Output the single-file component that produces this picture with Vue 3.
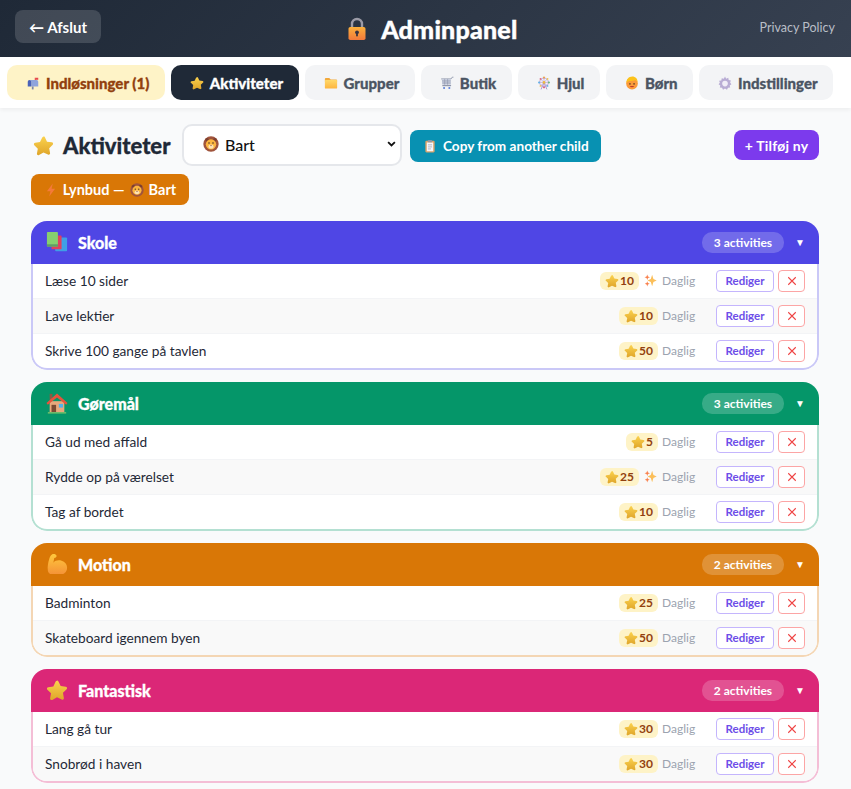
<template>
  <div class="admin">
    <!-- emoji set, reused through <use> -->
    <svg class="defs" aria-hidden="true">
      <defs>
        <linearGradient id="gold" x1="0" y1="0" x2="0" y2="1">
          <stop offset="0" stop-color="#fbd24e" />
          <stop offset="1" stop-color="#dfa52a" />
        </linearGradient>
        <linearGradient id="orange" x1="0" y1="0" x2="0" y2="1">
          <stop offset="0" stop-color="#ffc83d" />
          <stop offset="1" stop-color="#f59337" />
        </linearGradient>
        <linearGradient id="lockbody" x1="0" y1="0" x2="0" y2="1">
          <stop offset="0" stop-color="#fbb03b" />
          <stop offset="1" stop-color="#f4793b" />
        </linearGradient>
        <linearGradient id="foldercolor" x1="0" y1="0" x2="0" y2="1">
          <stop offset="0" stop-color="#ffd869" />
          <stop offset="1" stop-color="#fdb53f" />
        </linearGradient>
      </defs>
      <symbol id="star" viewBox="0 0 24 24">
        <path d="M12 1.500c.7 0 1.300.4 1.600 1.100l2.400 5 5.500.8c1.400.2 2 1.800 1 2.800l-4 3.900 1 5.500c.2 1.400-1.200 2.400-2.400 1.700L12 20l-5.100 2.800c-1.200.7-2.600-.3-2.400-1.700l1-5.500-4-3.900c-1-1-.4-2.600 1-2.800l5.500-.8 2.400-5c.3-.7.900-1.100 1.600-1.100z" fill="url(#gold)" />
      </symbol>
      <symbol id="lock" viewBox="0 0 24 24">
        <path d="M7 11V7a5 5 0 0 1 10 0v4" fill="none" stroke="#9a9aa6" stroke-width="2.400" />
        <rect x="3.500" y="10" width="17" height="13" rx="1.800" fill="url(#lockbody)" />
        <circle cx="12" cy="15.300" r="1.900" fill="#3b3340" />
        <rect x="11.100" y="15.500" width="1.800" height="4" rx=".8" fill="#3b3340" />
      </symbol>
      <symbol id="mailbox" viewBox="0 0 24 24">
        <rect x="15" y="3" width="2" height="7" fill="#e5484d" />
        <rect x="17" y="3" width="4" height="3.500" fill="#e5484d" />
        <path d="M6 7h12a3 3 0 0 1 3 3v8H9V10a3 3 0 0 0-3-3z" fill="#8fa4dc" />
        <path d="M6 7a3 3 0 0 1 3 3v8H3v-8a3 3 0 0 1 3-3z" fill="#4a62b8" />
        <rect x="10" y="18" width="3" height="5" fill="#7d86a6" />
      </symbol>
      <symbol id="folder" viewBox="0 0 24 24">
        <path d="M1.500 5C1.500 4.200 2.200 3.500 3 3.500h6L11.500 6H21c.8 0 1.500.7 1.500 1.500v2h-21z" fill="#f2a93b" />
        <rect x="1.500" y="7" width="21" height="14.500" rx="1.500" fill="url(#foldercolor)" />
      </symbol>
      <symbol id="cart" viewBox="0 0 24 24">
        <path d="M2 5h17l2-3h2" fill="none" stroke="#8b93a8" stroke-width="1.500" />
        <path d="M3 5h15.500v10H4z" fill="#c8cede" />
        <path d="M3.500 8.500h15M3.800 12h14.700M8 5v10M13 5v10" stroke="#8b93a8" stroke-width="1" />
        <path d="M4 15.500h15v2H4z" fill="#8b93a8" />
        <circle cx="7" cy="20.500" r="1.800" fill="#5e80d8" />
        <circle cx="16" cy="20.500" r="1.800" fill="#5e80d8" />
      </symbol>
      <symbol id="wheel" viewBox="0 0 24 24">
        <path d="M12 11l-5 12M12 11l5 12" stroke="#a98fc9" stroke-width="1.600" />
        <circle cx="12" cy="11" r="7.500" fill="none" stroke="#b79ad6" stroke-width="1.500" />
        <path d="M12 2v18M3 11h18M5.600 4.600l12.800 12.800M18.400 4.600L5.600 17.400" stroke="#a98fc9" stroke-width="1" />
        <circle cx="12" cy="2.500" r="1.700" fill="#f0a03c" />
        <circle cx="12" cy="19.500" r="1.700" fill="#e5607a" />
        <circle cx="3.500" cy="11" r="1.700" fill="#5fb3e6" />
        <circle cx="20.500" cy="11" r="1.700" fill="#68c07a" />
        <circle cx="6" cy="5" r="1.500" fill="#e5607a" />
        <circle cx="18" cy="5" r="1.500" fill="#f6c844" />
        <circle cx="6" cy="17" r="1.500" fill="#f6c844" />
        <circle cx="18" cy="17" r="1.500" fill="#5fb3e6" />
        <circle cx="12" cy="11" r="2.300" fill="#f0b83c" />
      </symbol>
      <symbol id="child" viewBox="0 0 24 24">
        <circle cx="12" cy="13" r="10" fill="#fb9a3a" />
        <path d="M2.500 12C2 6 6.500 1 12.500 1c5.500 0 9.500 4 9 10-1-2-2.500-3.500-4-4-3 1.500-8 2-10 1.500-2 .7-4 2-5 3.500z" fill="#fcc21b" />
        <circle cx="8.500" cy="13.500" r="1.300" fill="#5a3a20" />
        <circle cx="15.500" cy="13.500" r="1.300" fill="#5a3a20" />
        <path d="M8 17c2.200 3 5.800 3 8 0z" fill="#c0392b" />
      </symbol>
      <symbol id="gear" viewBox="0 0 24 24">
        <path d="M12 1l2 3.500 3.600-1.300.7 3.800 3.800.7-1.300 3.500L23 14l-3 2.200.9 3.600-3.800.4-1.700 3.400L12 21.500l-3.400 2.100-1.700-3.400-3.800-.4.900-3.600L1 14l2.200-2.300-1.300-3.500 3.800-.7.700-3.800L10 4.500z" fill="#b8acd4" />
        <circle cx="12" cy="13" r="4.800" fill="#f0edf7" />
      </symbol>
      <symbol id="lion" viewBox="0 0 24 24">
        <circle cx="12" cy="12" r="11.500" fill="#a0543c" />
        <circle cx="6" cy="5.500" r="2.600" fill="#7c3f2e" />
        <circle cx="18" cy="5.500" r="2.600" fill="#7c3f2e" />
        <circle cx="12" cy="12.500" r="7.800" fill="#fbb53f" />
        <circle cx="9" cy="10.500" r="1.100" fill="#3d2a22" />
        <circle cx="15" cy="10.500" r="1.100" fill="#3d2a22" />
        <ellipse cx="12" cy="16" rx="4" ry="3.200" fill="#fde3b4" />
        <path d="M10.500 13.800h3L12 15.500z" fill="#7c3f2e" />
      </symbol>
      <symbol id="bolt" viewBox="0 0 24 24">
        <path d="M15 1L5 14h6l-2 9 10-13h-6z" fill="#f47a3a" />
      </symbol>
      <symbol id="books" viewBox="0 0 24 24">
        <rect x="10" y="7" width="13" height="15" rx="1" fill="#3f9fe6" />
        <rect x="6" y="5" width="11" height="15" rx="1" fill="#e0405e" />
        <rect x="1" y="1" width="12" height="16" rx="1" fill="#86cf6f" />
        <rect x="1" y="14.500" width="12" height="2.500" fill="#5f9c66" />
      </symbol>
      <symbol id="house" viewBox="0 0 24 24">
        <rect x="4" y="2" width="3" height="7" fill="#8a5a44" />
        <rect x="4" y="10" width="16" height="12" fill="#e8a87c" />
        <path d="M12 1.500L.5 12l1.500 2L12 6l10 8 1.500-2z" fill="#e5533d" />
        <rect x="6" y="14" width="5" height="8" fill="#7a4a33" />
        <rect x="14" y="13" width="4.500" height="4" fill="#4fb2ea" />
        <rect x="2" y="22" width="20" height="1.500" fill="#7cc36b" />
      </symbol>
      <symbol id="muscle" viewBox="0 0 24 24">
        <path d="M2 19c-.6-4 .4-9 1.400-12 .6-2 1.100-4.500 3.100-5.500 2-.7 4.500-.2 5 1.500.4 1.300-1 2.300-2.500 2.500L8 10.500c2-2.500 6-3 9-2 3.500 1 6 4 6 7.500 0 3.500-2 6.500-5.500 7H6.500c-2.500 0-4.200-1.500-4.500-4z" fill="url(#orange)" />
      </symbol>
      <symbol id="sparkles" viewBox="0 0 24 24">
        <path d="M15 1.500l2.400 7.600 6.100 2.900-6.100 2.900L15 22.500l-2.400-7.600L6.500 12l6.100-2.900z" fill="#fbbf5a" />
        <path d="M6 1l1.300 3.700L11 6 7.300 7.300 6 11 4.700 7.300 1 6l3.700-1.300z" fill="#f97f4a" />
        <path d="M6 13.500l1.200 3.300 3.300 1.200-3.300 1.200L6 23l-1.200-3.800L1.500 18l3.300-1.200z" fill="#f97f4a" />
      </symbol>
      <symbol id="clipboard" viewBox="0 0 24 24">
        <rect x="4" y="3" width="16" height="20" rx="2" fill="#d9a36b" />
        <rect x="6.500" y="6" width="11" height="15" fill="#f5f7fb" />
        <rect x="8.500" y="1.500" width="7" height="4" rx="1" fill="#8f98a8" />
        <path d="M8.500 10h7M8.500 13.500h7M8.500 17h5" stroke="#9aa3b5" stroke-width="1.300" />
      </symbol>
    </svg>

    <header class="topbar">
      <button class="exit-btn">← Afslut</button>
      <h1 class="app-title">
        <svg class="emoji title-emoji"><use href="#lock" /></svg>
        Adminpanel
      </h1>
      <a class="privacy">Privacy Policy</a>
    </header>

    <nav class="tabs">
      <button
        v-for="tab in tabs"
        :key="tab.label"
        class="tab"
        :class="{ active: tab.active, pending: tab.pending }"
      >
        <svg class="emoji"><use :href="'#' + tab.icon" /></svg>
        {{ tab.label }}
      </button>
    </nav>

    <main class="content">
      <div class="toolbar">
        <h2 class="page-title">
          <svg class="emoji page-emoji"><use href="#star" /></svg>
          Aktiviteter
        </h2>
        <div class="child-select">
          <svg class="emoji"><use href="#lion" /></svg>
          <span class="child-name">Bart</span>
          <svg class="chevron" viewBox="0 0 12 8"><path d="M1.500 1.500L6 6l4.500-4.500" /></svg>
        </div>
        <button class="copy-btn">
          <svg class="emoji"><use href="#clipboard" /></svg>
          Copy from another child
        </button>
        <button class="add-btn">+ Tilføj ny</button>
      </div>

      <button class="flash-btn">
        <svg class="emoji"><use href="#bolt" /></svg>
        Lynbud —
        <svg class="emoji"><use href="#lion" /></svg>
        Bart
      </button>

      <section
        v-for="group in groups"
        :key="group.name"
        class="group"
        :style="{ '--accent': group.color }"
      >
        <div class="group-head">
          <svg class="emoji group-emoji"><use :href="'#' + group.icon" /></svg>
          <span class="group-name">{{ group.name }}</span>
          <span class="count">{{ group.items.length }} activities</span>
          <span class="caret">▼</span>
        </div>
        <div class="group-body">
          <div v-for="item in group.items" :key="item.name" class="row">
            <span class="row-name">{{ item.name }}</span>
            <span class="points">
              <svg class="emoji"><use href="#star" /></svg>{{ item.points }}
            </span>
            <svg v-if="item.sparkle" class="emoji sparkle"><use href="#sparkles" /></svg>
            <span class="freq">Daglig</span>
            <button class="edit-btn">Rediger</button>
            <button class="del-btn">
              <svg viewBox="0 0 12 12"><path d="M1.500 1.500l9 9M10.500 1.500l-9 9" /></svg>
            </button>
          </div>
        </div>
      </section>
    </main>
  </div>
</template>

<script setup>
const tabs = [
  { label: 'Indløsninger (1)', icon: 'mailbox', pending: true },
  { label: 'Aktiviteter', icon: 'star', active: true },
  { label: 'Grupper', icon: 'folder' },
  { label: 'Butik', icon: 'cart' },
  { label: 'Hjul', icon: 'wheel' },
  { label: 'Børn', icon: 'child' },
  { label: 'Indstillinger', icon: 'gear' }
]

const groups = [
  {
    name: 'Skole',
    icon: 'books',
    color: '#4f46e5',
    items: [
      { name: 'Læse 10 sider', points: 10, sparkle: true },
      { name: 'Lave lektier', points: 10 },
      { name: 'Skrive 100 gange på tavlen', points: 50 }
    ]
  },
  {
    name: 'Gøremål',
    icon: 'house',
    color: '#059669',
    items: [
      { name: 'Gå ud med affald', points: 5 },
      { name: 'Rydde op på værelset', points: 25, sparkle: true },
      { name: 'Tag af bordet', points: 10 }
    ]
  },
  {
    name: 'Motion',
    icon: 'muscle',
    color: '#d97706',
    items: [
      { name: 'Badminton', points: 25 },
      { name: 'Skateboard igennem byen', points: 50 }
    ]
  },
  {
    name: 'Fantastisk',
    icon: 'star',
    color: '#db2777',
    items: [
      { name: 'Lang gå tur', points: 30 },
      { name: 'Snobrød i haven', points: 30 }
    ]
  }
]
</script>

<style>
html,
body {
  margin: 0;
  overflow: hidden;
}
</style>

<style scoped>
.admin {
  width: 851px;
  height: 789px;
  overflow: hidden;
  background: #f9fafb;
  font-family: Lato, "Noto Sans", sans-serif;
  color: #1f2937;
}

.defs {
  position: absolute;
  width: 0;
  height: 0;
}

button {
  font-family: inherit;
  border: none;
  cursor: pointer;
}

.emoji {
  width: 14px;
  height: 14px;
  flex: none;
}

.topbar {
  height: 57px;
  box-sizing: border-box;
  padding: 0 16px 0 15px;
  display: flex;
  align-items: center;
  justify-content: space-between;
  background: linear-gradient(135deg, #1f2937, #374151);
}

.exit-btn {
  height: 33px;
  width: 86px;
  margin-top: -4px;
  padding: 0;
  border-radius: 8px;
  background: rgba(255, 255, 255, 0.15);
  color: #fff;
  font-size: 15px;
  font-weight: 700;
}

.app-title {
  margin: 0 0 0 2px;
  display: flex;
  align-items: center;
  gap: 12px;
  color: #fff;
  font-size: 25px;
  font-weight: 900;
  letter-spacing: 0.2px;
  -webkit-text-stroke: 0.4px #fff;
}

.title-emoji {
  width: 24px;
  height: 24px;
}

.privacy {
  color: #b9bec7;
  font-size: 12.500px;
  margin-top: -3px;
}

.tabs {
  height: 51px;
  box-sizing: border-box;
  padding: 8px 7px 0;
  display: flex;
  gap: 6px;
  background: #fff;
  box-shadow: 0 2px 4px rgba(0, 0, 0, 0.05);
  position: relative;
}

.tab {
  height: 35px;
  padding: 0 15.500px 0 19px;
  display: flex;
  align-items: center;
  gap: 6px;
  border-radius: 10px;
  background: #f3f4f6;
  color: #4b5563;
  font-size: 15px;
  font-weight: 900;
  white-space: nowrap;
  -webkit-text-stroke: 0.3px currentColor;
}

.tab.pending {
  background: #fef3c7;
  color: #92400e;
}

.tab.active {
  background: #1f2937;
  color: #fff;
}

.content {
  padding: 16px 32px 0 31px;
}

.toolbar {
  display: flex;
  align-items: center;
  gap: 8px;
  height: 42px;
}

.page-title {
  margin: 0 4px 0 2px;
  display: flex;
  align-items: center;
  gap: 9px;
  font-size: 22px;
  font-weight: 900;
  width: 137px;
  white-space: nowrap;
  -webkit-text-stroke: 0.3px currentColor;
}

.page-emoji {
  width: 21px;
  height: 21px;
}

.child-select {
  width: 220px;
  height: 42px;
  box-sizing: border-box;
  padding: 0 4px 2px 19px;
  display: flex;
  align-items: center;
  gap: 6px;
  background: #fff;
  border: 2px solid #e5e7eb;
  border-radius: 10px;
  font-size: 16px;
  font-weight: 500;
  color: #111;
}

.child-select .emoji {
  width: 16px;
  height: 16px;
}

.child-name {
  flex: auto;
}

.chevron {
  width: 9px;
  height: 6px;
  fill: none;
  stroke: #111;
  stroke-width: 2.400;
}

.copy-btn,
.add-btn,
.flash-btn {
  display: flex;
  align-items: center;
  color: #fff;
  font-weight: 700;
  white-space: nowrap;
}

.copy-btn {
  width: 191px;
  height: 32px;
  margin-top: 2px;
  padding: 0 0 0 13px;
  gap: 6px;
  border-radius: 8px;
  background: #0891b2;
  font-size: 13.600px;
}

.add-btn {
  margin-left: auto;
  width: 85px;
  height: 30px;
  padding: 0;
  justify-content: center;
  border-radius: 8px;
  background: #7c3aed;
  font-size: 14px;
  letter-spacing: 0.2px;
}

.flash-btn {
  margin-top: 8px;
  width: 158px;
  height: 31px;
  padding: 0;
  justify-content: center;
  gap: 5px;
  border-radius: 8px;
  background: #d97706;
  font-size: 14.500px;
}

.group {
  margin-top: 16px;
  margin-bottom: -4px;
  border-radius: 16px;
  overflow: hidden;
  background: #fff;
}

.group-head {
  height: 43px;
  padding: 0 14px 1px 15px;
  box-sizing: border-box;
  display: flex;
  align-items: center;
  background: var(--accent);
  color: #fff;
}

.group-body {
  border: 2px solid color-mix(in srgb, var(--accent) 30%, white);
  border-top: none;
  border-radius: 0 0 16px 16px;
  overflow: hidden;
}

.group-emoji {
  width: 22px;
  height: 22px;
  margin-right: 10px;
}

.group-name {
  flex: auto;
  font-size: 16px;
  font-weight: 900;
  -webkit-text-stroke: 0.3px #fff;
}

.count {
  padding: 3px 12px;
  border-radius: 10px;
  background: rgba(255, 255, 255, 0.2);
  font-size: 12px;
  font-weight: 700;
}

.caret {
  margin-left: 11px;
  font-size: 10px;
}

.row {
  height: 35px;
  box-sizing: border-box;
  padding: 0 12px 1px;
  display: flex;
  align-items: center;
  font-size: 13.700px;
  border-bottom: 1px solid #f3f4f6;
}

.row:nth-child(even) {
  background: #f9f9f9;
}

.row:last-child {
  border-bottom: none;
  height: 34px;
}

.row-name {
  flex: auto;
  color: #1f2937;
}

.points {
  height: 18px;
  padding: 0 5px;
  display: flex;
  align-items: center;
  gap: 1px;
  border-radius: 6px;
  background: #fef3c7;
  color: #92400e;
  font-size: 12px;
  font-weight: 700;
}

.sparkle {
  margin-left: 5px;
  width: 13px;
  height: 13px;
}

.sparkle + .freq {
  margin-left: 5px;
}

.freq {
  margin-left: 4px;
  width: 54px;
  color: #9ca3af;
  font-size: 12px;
}

.edit-btn,
.del-btn {
  height: 22px;
  background: #fff;
  border-radius: 4px;
}

.edit-btn {
  width: 58px;
  padding: 0;
  border: 1px solid #c4b5fd;
  color: #6d4ee8;
  font-size: 11.500px;
  font-weight: 700;
}

.del-btn {
  margin-left: 4px;
  width: 27px;
  padding: 0;
  display: flex;
  align-items: center;
  justify-content: center;
  border: 1px solid #fca5a5;
}

.del-btn svg {
  width: 10px;
  height: 10px;
  fill: none;
  stroke: #ef4444;
  stroke-width: 1.300;
}
</style>
